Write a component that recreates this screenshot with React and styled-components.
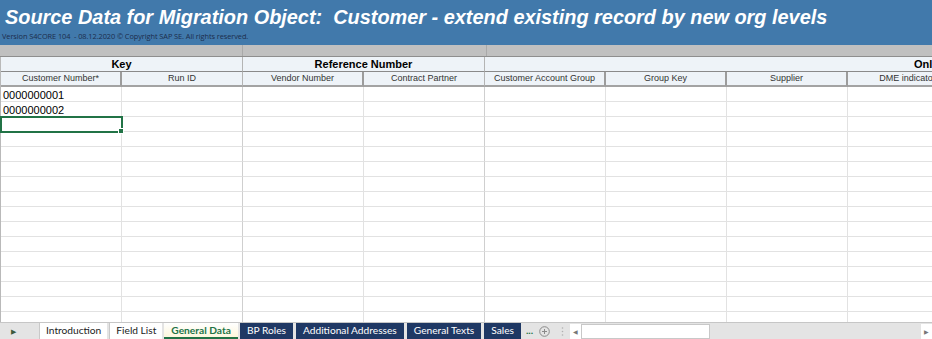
import React from "react";
import styled, { createGlobalStyle } from "styled-components";

const GlobalStyle = createGlobalStyle`
  html, body {
    margin: 0;
    padding: 0;
    background: #ffffff;
    overflow: hidden;
  }
`;

const COL_W = 121;

const groups = [
  { label: "Key", span: 2 },
  { label: "Reference Number", span: 2 },
  { label: "Only relevant for Vendor Integration", span: 4, indent: 429 },
];

const columns = [
  "Customer Number*",
  "Run ID",
  "Vendor Number",
  "Contract Partner",
  "Customer Account Group",
  "Group Key",
  "Supplier",
  "DME indicator",
];

// columns that close a group get a stronger line
const groupEnd = [false, true, false, true, false, false, false, false];

const rows = ["0000000001", "0000000002", "", "", "", "", "", "", "", "", "", "", "", "", "", "", ""];

const tabs = [
  { label: "Introduction", kind: "plain" },
  { label: "Field List", kind: "plain" },
  { label: "General Data", kind: "active" },
  { label: "BP Roles", kind: "dark" },
  { label: "Additional Addresses", kind: "dark" },
  { label: "General Texts", kind: "dark" },
  { label: "Sales", kind: "dark" },
];

const Page = styled.div`
  width: 932px;
  height: 339px;
  display: flex;
  flex-direction: column;
  overflow: hidden;
  background: #ffffff;
`;

const Banner = styled.div`
  height: 45px;
  background: #4179ab;
  display: flex;
  flex-direction: column;
  padding-left: 5px;
  box-sizing: border-box;
`;

const Title = styled.h1`
  margin: 5px 0 0;
  font-family: "Liberation Sans", Arial, sans-serif;
  font-weight: bold;
  font-style: italic;
  font-size: 19.9px;
  line-height: 24px;
  color: #ffffff;
  white-space: nowrap;
`;

const Version = styled.div`
  margin: 3px 0 0 -3px;
  font-family: "Open Sans", sans-serif;
  font-size: 7.4px;
  letter-spacing: -0.08px;
  line-height: 9px;
  color: #1c2d4c;
  white-space: nowrap;
`;

const Band = styled.div`
  height: 11px;
  background: #c0c0c0;
  border-bottom: 1px solid #8e8e8e;
  display: flex;
`;

const BandPart = styled.div`
  width: ${({ $w }) => $w}px;
  flex: none;
  border-right: 1px solid #a9a9a9;
`;

const Sheet = styled.div`
  flex: 1;
  overflow: hidden;
`;

const Grid = styled.div`
  display: grid;
  grid-template-columns: repeat(${columns.length}, ${COL_W}px);
  grid-auto-rows: 15px;
  width: ${columns.length * COL_W}px;
  border-left: 1px solid #b9b9b9;
`;

const GroupCell = styled.div`
  grid-column: span ${({ $span }) => $span};
  background: #eef3f8;
  border-right: 1px solid #b4b4b4;
  border-bottom: 1px solid #8a8a8a;
  font-family: "Liberation Sans", Arial, sans-serif;
  font-weight: bold;
  font-size: 11px;
  line-height: 14px;
  color: #000;
  text-align: ${({ $indent }) => ($indent ? "left" : "center")};
  padding-left: ${({ $indent }) => $indent || 0}px;
  white-space: nowrap;
  overflow: hidden;
`;

const HeadCell = styled.div`
  background: #eef3f8;
  border-right: ${({ $end }) => ($end ? "1px solid #b4b4b4" : "2px solid #9c9c9c")};
  border-bottom: 2px solid #a3a3a3;
  font-family: "Liberation Sans", Arial, sans-serif;
  font-size: 9px;
  line-height: 12px;
  color: #333;
  text-align: center;
  white-space: nowrap;
  overflow: hidden;
`;

const Cell = styled.div`
  position: relative;
  border-right: 1px solid ${({ $end }) => ($end ? "#cfcfcf" : "#e2e2e2")};
  border-bottom: 1px solid #e2e2e2;
  font-family: "Liberation Sans", Arial, sans-serif;
  font-size: 11px;
  line-height: 14px;
  padding-top: 1px;
  box-sizing: border-box;
  color: #000;
  padding-left: 2px;
  white-space: nowrap;
  ${({ $selected }) =>
    $selected &&
    `
    outline: 2px solid #217346;
    outline-offset: -1px;
    z-index: 1;
  `}
`;

const Handle = styled.span`
  position: absolute;
  right: -3px;
  bottom: -3px;
  width: 4px;
  height: 4px;
  background: #217346;
  border: 1px solid #fff;
`;

const TabBar = styled.div`
  height: 16px;
  background: #e4e4e4;
  border-top: 1px solid #c6c6c6;
  display: flex;
  align-items: stretch;
  font-family: Lato, "Noto Sans", sans-serif;
  font-size: 10.2px;
`;

const NavArea = styled.div`
  width: 39px;
  flex: none;
  display: flex;
  align-items: center;
  padding-left: 11px;
  box-sizing: border-box;
  color: #3c5a3c;
  font-size: 7px;
`;

const Tab = styled.div`
  flex: none;
  margin-right: 2px;
  padding: 0 6px;
  line-height: 15px;
  white-space: nowrap;
  box-sizing: border-box;
  ${({ $kind }) =>
    $kind === "dark"
      ? `
    background: #1f3864;
    color: #ffffff;
    padding: 0 7px;
    margin-right: 3px;
  `
      : $kind === "active"
      ? `
    background: linear-gradient(#ffffff, #fdf7dc);
    color: #217346;
    font-weight: bold;
    padding: 0 7px;
    border-bottom: 2px solid #217346;
    margin-right: 2px;
  `
      : `
    background: #ffffff;
    color: #222;
    border-left: 1px solid #c9c9c9;
  `}
`;

const Dots = styled.span`
  color: #217346;
  font-weight: bold;
  margin-left: 2px;
  line-height: 14px;
`;

const IconButton = styled.span`
  display: flex;
  align-items: center;
  justify-content: center;
  width: ${({ $w }) => $w}px;
  color: #9a9a9a;
`;

const Scroll = styled.div`
  flex: 1;
  display: flex;
  align-items: stretch;
  padding: 1px 0 0 1px;
`;

const ScrollBtn = styled.div`
  width: 11px;
  background: #ffffff;
  display: flex;
  align-items: center;
  justify-content: center;
  color: #777;
  font-size: 6px;
`;

const Thumb = styled.div`
  width: 129px;
  background: #ffffff;
  border: 1px solid #c8c8c8;
  box-sizing: border-box;
`;

const Track = styled.div`
  flex: 1;
`;

export default function App() {
  return (
    <>
      <GlobalStyle />
      <Page>
        <Banner>
          <Title>Source Data for Migration Object:&nbsp; Customer - extend existing record by new org levels</Title>
          <Version>Version S4CORE 104&nbsp; - 08.12.2020 © Copyright SAP SE. All rights reserved.</Version>
        </Banner>
        <Band>
          <BandPart $w={242} />
          <BandPart $w={243} />
        </Band>
        <Sheet>
          <Grid>
            {groups.map((g) => (
              <GroupCell key={g.label} $span={g.span} $indent={g.indent}>
                {g.label}
              </GroupCell>
            ))}
            {columns.map((c, i) => (
              <HeadCell key={c} $end={groupEnd[i]}>
                {c}
              </HeadCell>
            ))}
            {rows.map((value, r) =>
              columns.map((c, i) => (
                <Cell key={`${r}-${i}`} $end={groupEnd[i]} $selected={r === 2 && i === 0}>
                  {i === 0 ? value : ""}
                  {r === 2 && i === 0 && <Handle />}
                </Cell>
              ))
            )}
          </Grid>
        </Sheet>
        <TabBar>
          <NavArea>▶</NavArea>
          {tabs.map((t) => (
            <Tab key={t.label} $kind={t.kind}>
              {t.label}
            </Tab>
          ))}
          <Dots>...</Dots>
          <IconButton $w={22}>
            <svg width="11" height="11" viewBox="0 0 11 11">
              <circle cx="5.5" cy="5.5" r="4.8" fill="none" stroke="#8a8a8a" strokeWidth="1" />
              <path d="M5.5 3v5M3 5.5h5" stroke="#8a8a8a" strokeWidth="1" />
            </svg>
          </IconButton>
          <IconButton $w={14}>
            <svg width="3" height="9" viewBox="0 0 3 9">
              <circle cx="1.5" cy="1" r="0.8" fill="#b0b0b0" />
              <circle cx="1.5" cy="4.5" r="0.8" fill="#b0b0b0" />
              <circle cx="1.5" cy="8" r="0.8" fill="#b0b0b0" />
            </svg>
          </IconButton>
          <Scroll>
            <ScrollBtn>◀</ScrollBtn>
            <Thumb />
            <Track />
            <ScrollBtn>▶</ScrollBtn>
          </Scroll>
        </TabBar>
      </Page>
    </>
  );
}
